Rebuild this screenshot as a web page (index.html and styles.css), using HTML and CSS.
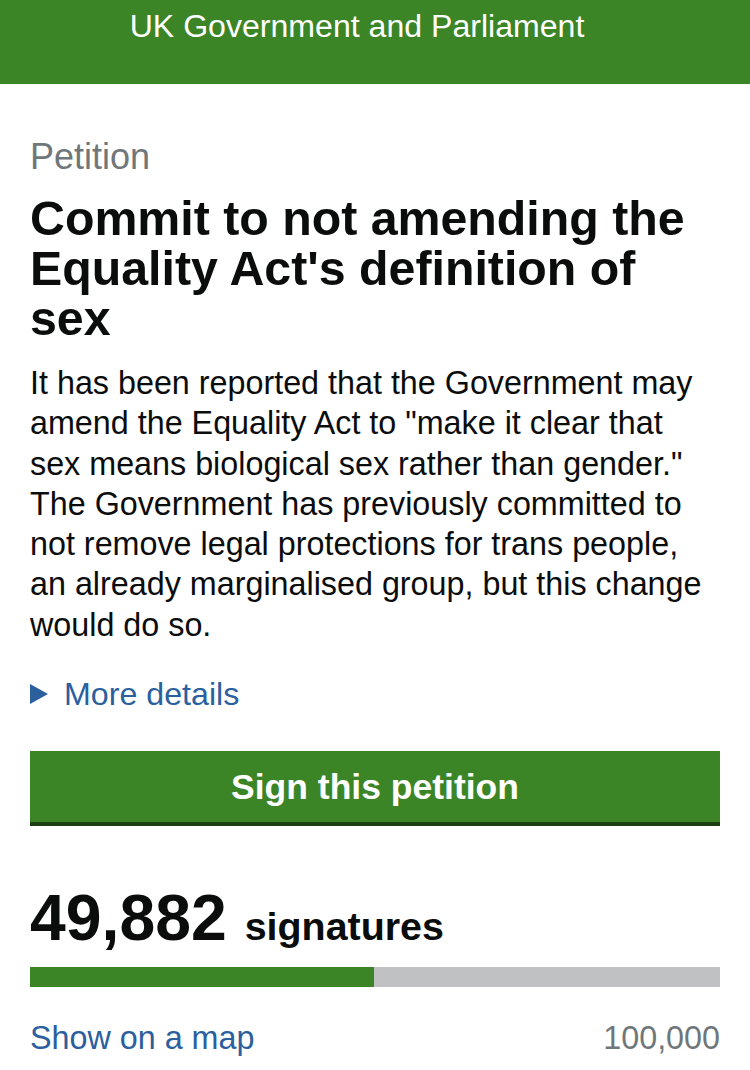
FILE: index.html
```html
<!DOCTYPE html>
<html>
<head>
<meta charset="utf-8">
<link rel="stylesheet" href="styles.css">
</head>
<body>
<header class="topbar">
  <div class="topbar-title">UK Government and Parliament</div>
</header>
<main class="content">
  <div class="label">Petition</div>
  <h1 class="title">Commit to not amending the Equality Act's definition of sex</h1>
  <p class="body">It has been reported that the Government may amend the Equality Act to "make it clear that sex means biological sex rather than gender." The Government has previously committed to not remove legal protections for trans people, an already marginalised group, but this change would do so.</p>
  <div class="details">
    <span class="arrow"></span>
    <span class="details-link">More details</span>
  </div>
  <div class="button">Sign this petition</div>
  <div class="count"><span class="count-num">49,882</span><span class="count-word">signatures</span></div>
  <div class="bar"><div class="bar-fill" style="width: 49.882%"></div></div>
  <div class="footer-row">
    <span class="map-link">Show on a map</span>
    <span class="target">100,000</span>
  </div>
</main>
</body>
</html>
```
FILE: styles.css
```css
html, body {
  margin: 0;
  padding: 0;
  background: #ffffff;
  font-family: "Liberation Sans", Arial, sans-serif;
  color: #0b0c0c;
}
.topbar {
  background: #3b8527;
  height: 84px;
  display: flex;
  justify-content: center;
}
.topbar-title {
  color: #ffffff;
  font-size: 32.1px;
  line-height: 40px;
  padding-top: 6px;
  padding-right: 36px;
}
.content {
  padding: 0 30px;
}
.label {
  color: #6f777b;
  font-size: 36px;
  line-height: 40px;
  margin-top: 53px;
}
.title {
  margin: 16px 20px 0 0;
  font-size: 48.3px;
  line-height: 50px;
  font-weight: bold;
}
.body {
  margin: 20px 0 0;
  font-size: 32.3px;
  line-height: 40.3px;
}
.details {
  display: flex;
  align-items: center;
  gap: 16px;
  margin-top: 29px;
}
.arrow {
  width: 0;
  height: 0;
  border-top: 10px solid transparent;
  border-bottom: 10px solid transparent;
  border-left: 18px solid #2b5f9d;
}
.details-link {
  color: #2b5f9d;
  font-size: 32.2px;
  line-height: 40px;
}
.button {
  margin-top: 37px;
  background: #3b8527;
  border-bottom: 4px solid #1d3f12;
  height: 71px;
  box-sizing: content-box;
  display: flex;
  align-items: center;
  justify-content: center;
  color: #ffffff;
  font-weight: bold;
  font-size: 35.5px;
  padding-top: 0;
  line-height: 40px;
}
.button::before {
  content: "";
  display: block;
  height: 3px;
  width: 0;
  align-self: flex-end;
}
.count {
  margin-top: 57px;
  line-height: 70px;
  height: 70px;
}
.count-num {
  font-size: 64.3px;
  font-weight: bold;
  margin-right: 18px;
}
.count-word {
  font-size: 39.4px;
  font-weight: bold;
}
.bar {
  margin-top: 14px;
  height: 20px;
  background: #bfc1c3;
}
.bar-fill {
  height: 100%;
  background: #3b8527;
}
.footer-row {
  margin-top: 31px;
  display: flex;
  justify-content: space-between;
  font-size: 32.3px;
  line-height: 40px;
}
.map-link {
  color: #2b5f9d;
}
.target {
  color: #6f777b;
}
```
